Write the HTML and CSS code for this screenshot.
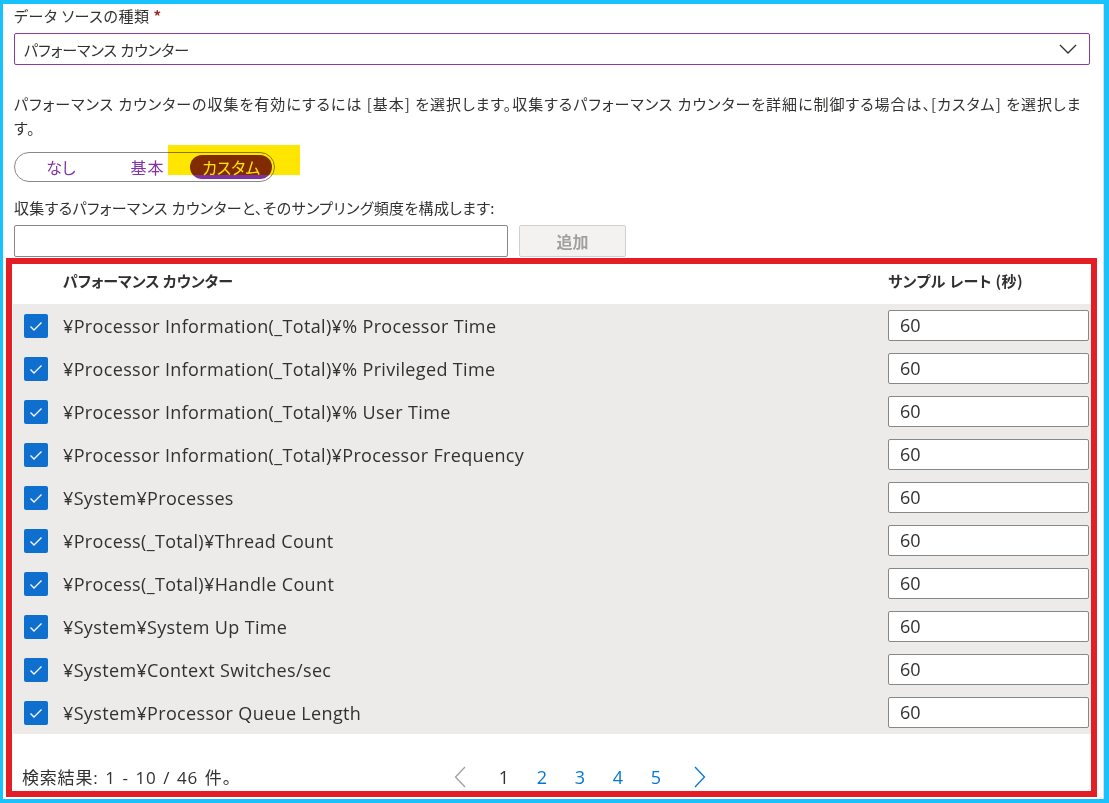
FILE: index.html
```html
<!DOCTYPE html>
<html lang="ja">
<head>
<meta charset="utf-8">
<link rel="stylesheet" href="styles.css">
</head>
<body>
<div class="page">
  <div class="field-label">データ ソースの種類 <span class="req">*</span></div>
  <div class="select">
    <span>パフォーマンス カウンター</span>
    <svg class="chev-down" width="18" height="10" viewBox="0 0 18 10"><polyline points="1,1 9,9 17,1" fill="none" stroke="#323130" stroke-width="1.3"/></svg>
  </div>
  <p class="desc">パフォーマンス カウンターの収集を有効にするには [基本] を選択します。収集するパフォーマンス カウンターを詳細に制御する場合は、[カスタム] を選択します。</p>
  <div class="toggle-wrap">
    <div class="toggle">
      <span class="opt opt-none">なし</span>
      <span class="opt opt-basic">基本</span>
      <span class="opt opt-custom"><span class="sel-pill">カスタム</span></span>
    </div>
    <div class="highlight"></div>
  </div>
  <div class="sub-label">収集するパフォーマンス カウンターと、そのサンプリング頻度を構成します:</div>
  <div class="add-row">
    <div class="text-input"></div>
    <div class="add-btn">追加</div>
  </div>
  <div class="redbox">
    <div class="thead">
      <span class="h-name">パフォーマンス カウンター</span>
      <span class="h-rate">サンプル レート (秒)</span>
    </div>
    <div class="tbody">
      <div class="row"><span class="cb"><svg width="24" height="24" viewBox="0 0 24 24"><polyline points="6.5,12.5 10,16 17.5,8.5" fill="none" stroke="#fff" stroke-width="1.3"/></svg></span><span class="name">¥Processor Information(_Total)¥% Processor Time</span><span class="rate">60</span></div>
      <div class="row"><span class="cb"><svg width="24" height="24" viewBox="0 0 24 24"><polyline points="6.5,12.5 10,16 17.5,8.5" fill="none" stroke="#fff" stroke-width="1.3"/></svg></span><span class="name">¥Processor Information(_Total)¥% Privileged Time</span><span class="rate">60</span></div>
      <div class="row"><span class="cb"><svg width="24" height="24" viewBox="0 0 24 24"><polyline points="6.5,12.5 10,16 17.5,8.5" fill="none" stroke="#fff" stroke-width="1.3"/></svg></span><span class="name">¥Processor Information(_Total)¥% User Time</span><span class="rate">60</span></div>
      <div class="row"><span class="cb"><svg width="24" height="24" viewBox="0 0 24 24"><polyline points="6.5,12.5 10,16 17.5,8.5" fill="none" stroke="#fff" stroke-width="1.3"/></svg></span><span class="name">¥Processor Information(_Total)¥Processor Frequency</span><span class="rate">60</span></div>
      <div class="row"><span class="cb"><svg width="24" height="24" viewBox="0 0 24 24"><polyline points="6.5,12.5 10,16 17.5,8.5" fill="none" stroke="#fff" stroke-width="1.3"/></svg></span><span class="name">¥System¥Processes</span><span class="rate">60</span></div>
      <div class="row"><span class="cb"><svg width="24" height="24" viewBox="0 0 24 24"><polyline points="6.5,12.5 10,16 17.5,8.5" fill="none" stroke="#fff" stroke-width="1.3"/></svg></span><span class="name">¥Process(_Total)¥Thread Count</span><span class="rate">60</span></div>
      <div class="row"><span class="cb"><svg width="24" height="24" viewBox="0 0 24 24"><polyline points="6.5,12.5 10,16 17.5,8.5" fill="none" stroke="#fff" stroke-width="1.3"/></svg></span><span class="name">¥Process(_Total)¥Handle Count</span><span class="rate">60</span></div>
      <div class="row"><span class="cb"><svg width="24" height="24" viewBox="0 0 24 24"><polyline points="6.5,12.5 10,16 17.5,8.5" fill="none" stroke="#fff" stroke-width="1.3"/></svg></span><span class="name">¥System¥System Up Time</span><span class="rate">60</span></div>
      <div class="row"><span class="cb"><svg width="24" height="24" viewBox="0 0 24 24"><polyline points="6.5,12.5 10,16 17.5,8.5" fill="none" stroke="#fff" stroke-width="1.3"/></svg></span><span class="name">¥System¥Context Switches/sec</span><span class="rate">60</span></div>
      <div class="row"><span class="cb"><svg width="24" height="24" viewBox="0 0 24 24"><polyline points="6.5,12.5 10,16 17.5,8.5" fill="none" stroke="#fff" stroke-width="1.3"/></svg></span><span class="name">¥System¥Processor Queue Length</span><span class="rate">60</span></div>
    </div>
    <div class="tfoot">
      <span class="count">検索結果: 1 - 10 / 46 件。</span>
      <div class="pager">
        <svg class="pg-prev" width="12" height="22" viewBox="0 0 12 22"><polyline points="11,1 1.5,11 11,21" fill="none" stroke="#a19f9d" stroke-width="1.3"/></svg>
        <span class="pg cur">1</span>
        <span class="pg">2</span>
        <span class="pg">3</span>
        <span class="pg">4</span>
        <span class="pg">5</span>
        <svg class="pg-next" width="12" height="22" viewBox="0 0 12 22"><polyline points="1,1 10.5,11 1,21" fill="none" stroke="#0078d4" stroke-width="1.3"/></svg>
      </div>
    </div>
  </div>
</div>
</body>
</html>
```

FILE: styles.css
```css
* { box-sizing: border-box; }

html, body {
  margin: 0;
}

body {
  width: 1109px;
  height: 803px;
  overflow: hidden;
  background: #18c3fd;
  padding: 4px 5px 4px 3px;
  font-family: "Noto Sans CJK JP", "Noto Sans", sans-serif;
  font-feature-settings: "palt";
  color: #323130;
}

.page {
  position: relative;
  height: 795px;
  background: #fff;
  border-right: 1px solid #dcdcdc;
  padding: 2px 13px 0 11px;
}

.field-label {
  font-size: 15px;
  line-height: 20px;
  letter-spacing: 0.6px;
}

.req {
  color: #a4262c;
  font-weight: bold;
}

.select {
  margin-top: 7px;
  height: 32px;
  border: 1px solid #8a3aa8;
  border-radius: 2px;
  display: flex;
  align-items: center;
  justify-content: space-between;
  padding: 0 12px 0 9px;
  font-size: 15px;
}

.desc {
  margin: 27px 0 0;
  font-size: 15px;
  line-height: 24px;
  letter-spacing: 1px;
}

.toggle-wrap {
  position: relative;
  margin-top: 12px;
  width: 261px;
}

.toggle {
  height: 30px;
  border: 1px solid #8a8886;
  border-radius: 15px;
  display: flex;
  align-items: center;
  padding: 0 1px;
  font-size: 16px;
  color: #8231a6;
}

.opt {
  display: flex;
  justify-content: center;
  align-items: center;
}

.opt-none { width: 90px; }
.opt-basic { width: 84px; letter-spacing: 1px; }
.opt-custom { width: 84px; }

.sel-pill {
  width: 82px;
  height: 24px;
  border-radius: 12px;
  background: #81309f;
  color: #fff;
  display: flex;
  align-items: center;
  justify-content: center;
  line-height: 24px;
}

.highlight {
  position: absolute;
  left: 154px;
  top: -7px;
  width: 132px;
  height: 30px;
  background: #ffe600;
  mix-blend-mode: multiply;
}

.sub-label {
  margin-top: 16px;
  font-size: 15px;
  line-height: 20px;
  letter-spacing: 0.35px;
}

.add-row {
  margin-top: 7px;
  display: flex;
  gap: 11px;
  height: 32px;
}

.text-input {
  width: 494px;
  border: 1px solid #8a8886;
  border-radius: 2px;
}

.add-btn {
  width: 107px;
  background: #f3f2f1;
  border: 1px solid #d2d0ce;
  border-radius: 2px;
  color: #a19f9d;
  font-weight: bold;
  font-size: 16px;
  display: flex;
  align-items: center;
  justify-content: center;
}

.redbox {
  margin: 1px 0 0 -8px;
  width: 1091px;
  height: 539px;
  border: 6px solid #e31e24;
  padding: 0 0 0 1px;
}

.thead {
  height: 40px;
  display: grid;
  grid-template-columns: 50px 1fr 203px;
  padding-top: 6px;
  font-size: 15px;
  line-height: 22px;
  font-weight: bold;
}

.h-name { grid-column: 2; }
.h-rate { grid-column: 3; letter-spacing: 0.4px; }

.tbody {
  background: #edebe9;
}

.row {
  height: 43px;
  display: grid;
  grid-template-columns: 50px 1fr 203px;
  align-items: center;
}

.cb {
  margin-left: 11px;
  width: 24px;
  height: 24px;
  border-radius: 2px;
  background: #0f6fcf;
  display: flex;
}

.name {
  font-family: "Open Sans", "Noto Sans CJK JP", sans-serif;
  font-size: 18px;
  letter-spacing: 0.35px;
}

.rate {
  width: 201px;
  height: 31px;
  background: #fff;
  border: 1px solid #8a8886;
  border-radius: 2px;
  padding-left: 11px;
  font-family: "Open Sans", sans-serif;
  font-size: 18px;
  line-height: 29px;
}

.tfoot {
  height: 57px;
  display: grid;
  grid-template-columns: 441px auto;
  align-items: end;
  padding-bottom: 2px;
}

.count {
  padding-left: 9px;
  font-family: "Open Sans", "Noto Sans CJK JP", sans-serif;
  font-size: 17px;
  line-height: 22px;
  letter-spacing: 0.8px;
  word-spacing: 1.5px;
}

.pager {
  display: flex;
  align-items: center;
  height: 24px;
}

.pg {
  width: 38px;
  text-align: center;
  font-family: "Open Sans", sans-serif;
  font-size: 18px;
  color: #0078d4;
}

.pg.cur {
  margin-left: 19px;
  color: #323130;
}

.pg-next {
  margin-left: 19px;
}
```
